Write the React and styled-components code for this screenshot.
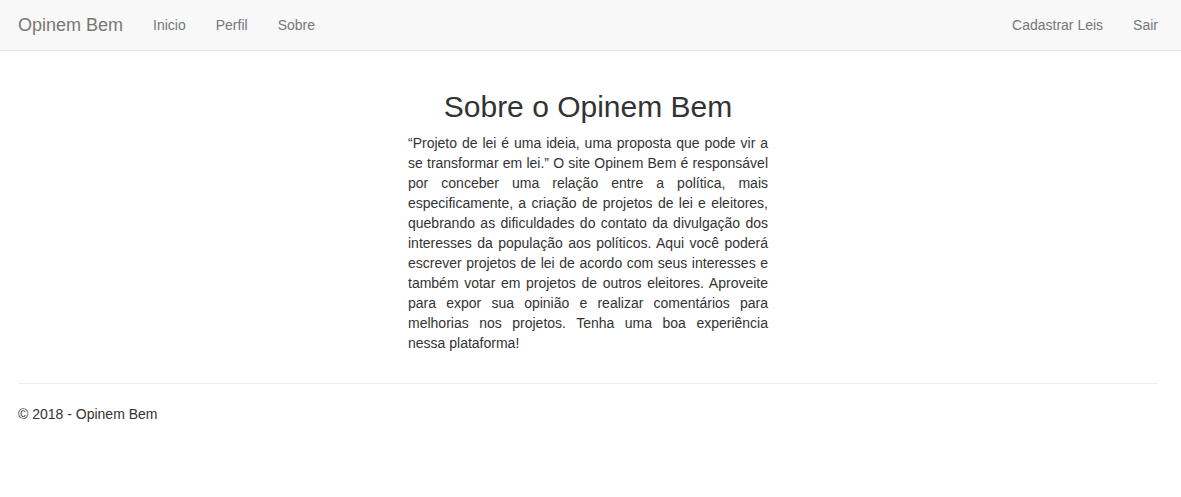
import React from "react";
import styled, { createGlobalStyle } from "styled-components";

const GlobalStyle = createGlobalStyle`
	html, body {
		margin: 0;
		padding: 0;
		background: #fff;
	}
	body {
		font-family: "Liberation Sans", Arial, Helvetica, sans-serif;
		font-size: 14px;
		line-height: 20px;
		color: #333;
	}
`;

const Navbar = styled.nav`
	display: flex;
	align-items: center;
	justify-content: space-between;
	height: 50px;
	background: #f8f8f8;
	border-bottom: 1px solid #e7e7e7;
	padding: 0 8px 0 3px;
`;

const NavGroup = styled.ul`
	display: flex;
	align-items: center;
	list-style: none;
	margin: 0;
	padding: 0;
`;

const Brand = styled.a`
	display: block;
	padding: 15px;
	font-size: 18px;
	line-height: 20px;
	color: #777;
	text-decoration: none;
`;

const NavLink = styled.a`
	display: block;
	padding: 15px;
	font-size: 14px;
	line-height: 20px;
	color: #777;
	text-decoration: none;
`;

const Content = styled.main`
	padding: 19px 23px 0 18px;
`;

const About = styled.section`
	display: flow-root;
	width: 360px;
	margin: 0 auto;
`;

const Title = styled.h2`
	margin: 20px 0 10px;
	font-size: 30px;
	font-weight: 500;
	line-height: 1.1;
	text-align: center;
`;

const Text = styled.p`
	margin: 0 0 10px;
	text-align: justify;
`;

const Rule = styled.hr`
	margin: 20px 0;
	border: 0;
	border-top: 1px solid #eee;
`;

const Footer = styled.footer`
	p {
		margin: 0 0 10px;
	}
`;

const App = () => {
	return (
		<>
			<GlobalStyle />
			<Navbar>
				<NavGroup>
					<li>
						<Brand href="#">Opinem Bem</Brand>
					</li>
					<li>
						<NavLink href="#">Inicio</NavLink>
					</li>
					<li>
						<NavLink href="#">Perfil</NavLink>
					</li>
					<li>
						<NavLink href="#">Sobre</NavLink>
					</li>
				</NavGroup>
				<NavGroup>
					<li>
						<NavLink href="#">Cadastrar Leis</NavLink>
					</li>
					<li>
						<NavLink href="#">Sair</NavLink>
					</li>
				</NavGroup>
			</Navbar>
			<Content>
				<About>
					<Title>Sobre o Opinem Bem</Title>
					<Text>
						“Projeto de lei é uma ideia, uma proposta que pode vir a se
						transformar em lei.” O site Opinem Bem é responsável por conceber
						uma relação entre a política, mais especificamente, a criação de
						projetos de lei e eleitores, quebrando as dificuldades do contato
						da divulgação dos interesses da população aos políticos. Aqui você
						poderá escrever projetos de lei de acordo com seus interesses e
						também votar em projetos de outros eleitores. Aproveite para expor
						sua opinião e realizar comentários para melhorias nos projetos.
						Tenha uma boa experiência nessa plataforma!
					</Text>
				</About>
				<Rule />
				<Footer>
					<p>© 2018 - Opinem Bem</p>
				</Footer>
			</Content>
		</>
	);
};

export default App;
